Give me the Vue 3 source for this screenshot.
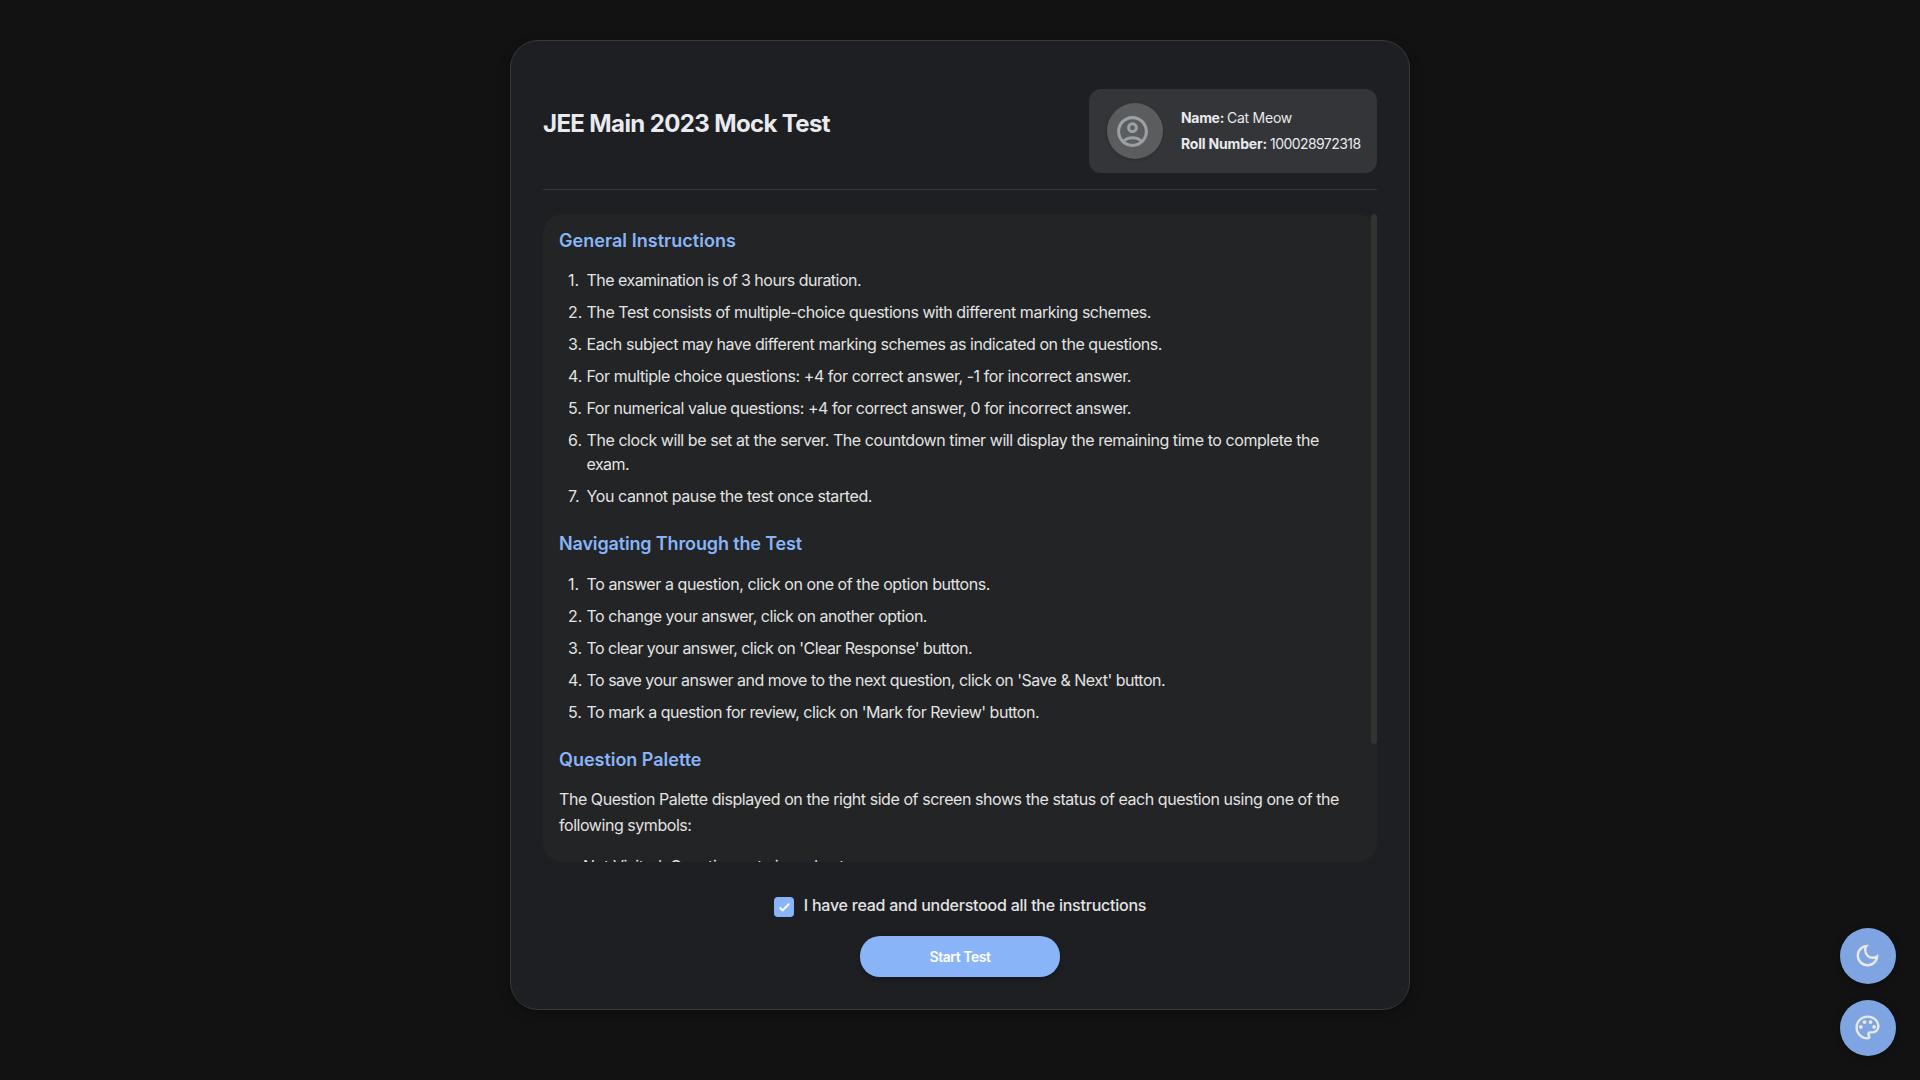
<script setup>
import { ref } from 'vue'

const vFit = {
  mounted(el, { value }) {
    const range = document.createRange()
    range.selectNodeContents(el)
    const natural = range.getBoundingClientRect().width
    const gaps = el.textContent.length
    el.style.letterSpacing = `${((value - natural) / gaps).toFixed(4)}px`
  },
}

const agreed = ref(true)

const candidate = [
  { label: 'Name:', labelWidth: 43, value: 'Cat Meow', valueWidth: 65 },
  { label: 'Roll Number:', labelWidth: 86, value: '100028972318', valueWidth: 90.5 },
]

const sections = [
  {
    title: 'General Instructions',
    width: 177,
    items: [
      [['The examination is of 3 hours duration.', 274.5]],
      [['The Test consists of multiple-choice questions with different marking schemes.', 564.5]],
      [['Each subject may have different marking schemes as indicated on the questions.', 575.5]],
      [['For multiple choice questions: +4 for correct answer, -1 for incorrect answer.', 544.5]],
      [['For numerical value questions: +4 for correct answer, 0 for incorrect answer.', 544.5]],
      [
        ['The clock will be set at the server. The countdown timer will display the remaining time to complete the', 732.5],
        ['exam.', 42.5],
      ],
      [['You cannot pause the test once started.', 285.5]],
    ],
  },
  {
    title: 'Navigating Through the Test',
    width: 243,
    items: [
      [['To answer a question, click on one of the option buttons.', 403.5]],
      [['To change your answer, click on another option.', 340.5]],
      [["To clear your answer, click on 'Clear Response' button.", 385.5]],
      [["To save your answer and move to the next question, click on 'Save & Next' button.", 578.5]],
      [["To mark a question for review, click on 'Mark for Review' button.", 452.5]],
    ],
  },
]

const paletteIntro = [
  ['The Question Palette displayed on the right side of screen shows the status of each question using one of the', 780],
  ['following symbols:', 132.5],
]
</script>

<template>
  <main class="page">
    <section class="card">
      <header class="head">
        <h1><span v-fit="287">JEE Main 2023 Mock Test</span></h1>
        <div class="user">
          <div class="avatar">
            <svg viewBox="0 0 24 24" width="37" height="37">
              <path d="M12 2C6.48 2 2 6.48 2 12s4.48 10 10 10 10-4.48 10-10S17.52 2 12 2zM7.35 18.5C8.66 17.56 10.26 17 12 17s3.34.56 4.65 1.5C15.34 19.44 13.74 20 12 20s-3.34-.56-4.65-1.5zm10.79-1.38C16.45 15.8 14.32 15 12 15s-4.45.8-6.14 2.12C4.7 15.73 4 13.95 4 12c0-4.42 3.58-8 8-8s8 3.58 8 8c0 1.95-.7 3.73-1.86 5.12zM12 6c-1.93 0-3.5 1.57-3.5 3.5S10.07 13 12 13s3.5-1.57 3.5-3.5S13.93 6 12 6zm0 5c-.83 0-1.5-.67-1.5-1.5S11.17 8 12 8s1.5.67 1.5 1.5S12.83 11 12 11z" />
            </svg>
          </div>
          <div class="details">
            <p v-for="c in candidate" :key="c.label">
              <strong v-fit="c.labelWidth">{{ c.label }}</strong>
              <span v-fit="c.valueWidth">{{ c.value }}</span>
            </p>
          </div>
        </div>
      </header>

      <div class="instructions">
        <div class="content">
          <template v-for="s in sections" :key="s.title">
            <h2><span v-fit="s.width">{{ s.title }}</span></h2>
            <ol>
              <li v-for="(lines, i) in s.items" :key="i">
                <span class="num">{{ i + 1 }}.</span>
                <div>
                  <div v-for="l in lines" :key="l[0]"><span v-fit="l[1]">{{ l[0] }}</span></div>
                </div>
              </li>
            </ol>
          </template>
          <h2><span v-fit="142.5">Question Palette</span></h2>
          <div class="intro">
            <div v-for="l in paletteIntro" :key="l[0]"><span v-fit="l[1]">{{ l[0] }}</span></div>
          </div>
          <div class="status"><span v-fit="261">Not Visited: Question not viewed yet</span></div>
        </div>
        <div class="track"><div class="thumb"></div></div>
      </div>

      <footer class="foot">
        <label class="agree" @click.prevent="agreed = !agreed">
          <span class="box" :class="{ on: agreed }">
            <svg v-if="agreed" viewBox="0 0 20 20" width="20" height="20">
              <path d="M5.7 10.6 8.7 13.4 15.2 6.6" />
            </svg>
          </span>
          <span v-fit="342.5">I have read and understood all the instructions</span>
        </label>
        <button class="start"><span v-fit="61">Start Test</span></button>
      </footer>
    </section>

    <nav class="fabs">
      <button class="fab">
        <svg viewBox="0 -960 960 960" width="29" height="29">
          <path d="M480-120q-150 0-255-105T120-480q0-150 105-255t255-105q14 0 27.5 1t26.5 3q-41 29-65.5 75.5T444-660q0 90 63 153t153 63q55 0 101-24.5t75-65.5q2 13 3 26.5t1 27.5q0 150-105 255T480-120Zm0-80q88 0 158-48.5T740-375q-20 5-40 8t-40 3q-123 0-209.5-86.5T364-660q0-20 3-40t8-40q-78 32-126.5 102T200-480q0 116 82 198t198 82Z" />
        </svg>
      </button>
      <button class="fab">
        <svg viewBox="0 0 24 24" width="29" height="29">
          <path d="M12 22C6.49 22 2 17.51 2 12S6.49 2 12 2s10 4.04 10 9c0 3.31-2.69 6-6 6h-1.77c-.28 0-.5.22-.5.5 0 .12.05.23.13.33.41.47.64 1.06.64 1.67A2.5 2.5 0 0 1 12 22zm0-18c-4.41 0-8 3.59-8 8s3.59 8 8 8c.28 0 .5-.22.5-.5a.54.54 0 0 0-.14-.35c-.41-.46-.63-1.05-.63-1.65a2.5 2.5 0 0 1 2.5-2.5H16c2.21 0 4-1.79 4-4 0-3.86-3.59-7-8-7z" />
          <circle cx="6.5" cy="11.5" r="1.6" />
          <circle cx="9.5" cy="7.5" r="1.6" />
          <circle cx="14.5" cy="7.5" r="1.6" />
          <circle cx="17.5" cy="11.5" r="1.6" />
        </svg>
      </button>
    </nav>
  </main>
</template>

<style>
body {
  background: #121212;
}
</style>

<style scoped>
.page {
  box-sizing: border-box;
  height: 1080px;
  padding-top: 40px;
  background: #121212;
  color: #e3e3e3;
  font-family: Inter, 'Open Sans', sans-serif;
  font-size: 16px;
  font-weight: 440;
  overflow: hidden;
}
h1,
h2,
p,
ol {
  margin: 0;
  padding: 0;
}
.card {
  box-sizing: border-box;
  display: flex;
  flex-direction: column;
  width: 900px;
  height: 970px;
  margin: 0 auto;
  padding: 32px;
  border: 1px solid #37383b;
  border-radius: 28px;
  background: #1e1f23;
  box-shadow: 0 4px 12px rgba(0, 0, 0, 0.3);
}
.head {
  display: flex;
  justify-content: space-between;
  align-items: center;
  padding: 16px 0;
  border-bottom: 1px solid #35363a;
}
h1 {
  margin-bottom: 15px;
  font-size: 24px;
  font-weight: 650;
  line-height: 32px;
  color: #e8eaed;
  white-space: nowrap;
}
.user {
  box-sizing: border-box;
  display: flex;
  align-items: center;
  gap: 18px;
  width: 288px;
  height: 84px;
  padding: 0 0 0 18px;
  border-radius: 12px;
  background: #343538;
}
.avatar {
  box-sizing: border-box;
  display: flex;
  align-items: center;
  justify-content: center;
  width: 56px;
  height: 56px;
  padding-right: 5px;
  border-radius: 50%;
  background: #5b5c5e;
  box-shadow: 0 1px 3px rgba(0, 0, 0, 0.2);
}
.avatar svg {
  fill: #9aa0a6;
}
.details {
  font-size: 14px;
  line-height: 26px;
  color: #e8eaed;
  white-space: nowrap;
}
.details p {
  display: flex;
  gap: 3px;
}
.details strong {
  font-weight: 700;
}
.instructions {
  display: flex;
  justify-content: space-between;
  height: 648px;
  margin-top: 24px;
  border-radius: 20px;
  background: #222425;
}
.content {
  box-sizing: border-box;
  width: 828px;
  height: 648px;
  padding: 14px 0 0 16px;
  overflow: hidden;
  white-space: nowrap;
}
h2 {
  margin-bottom: 16px;
  font-size: 18px;
  font-weight: 600;
  line-height: 24px;
  color: #8ab4f8;
}
h2:first-child {
  padding-top: 1px;
  margin-bottom: 15px;
}
ol {
  display: flex;
  flex-direction: column;
  gap: 8px;
  margin-bottom: 24px;
  list-style: none;
  line-height: 24px;
}
li {
  display: flex;
}
.num {
  box-sizing: border-box;
  width: 27.5px;
  padding-left: 9px;
}
.intro {
  margin-top: -2px;
  line-height: 26px;
}
.status {
  margin: 16px 0 0 24px;
  line-height: 24px;
}
.track {
  width: 6px;
}
.thumb {
  height: 530px;
  border-radius: 3px;
  background: #333332;
}
.foot {
  display: flex;
  flex-direction: column;
  align-items: center;
  gap: 19px;
  padding-top: 31px;
}
.agree {
  display: flex;
  align-items: center;
  gap: 10px;
  height: 24px;
  font-weight: 530;
  line-height: 24px;
  white-space: nowrap;
}
.box {
  width: 20px;
  height: 20px;
  margin-top: 4px;
  border-radius: 4px;
  background: #35363a;
}
.box.on {
  background: #8ab4f8;
}
.box svg {
  display: block;
  fill: none;
  stroke: #fff;
  stroke-width: 2;
}
.start {
  width: 200px;
  height: 41px;
  padding: 0;
  border: 0;
  border-radius: 20px;
  background: #8ab4f8;
  color: #fff;
  font: 600 14px Inter, sans-serif;
  box-shadow: 0 2px 5px rgba(0, 0, 0, 0.3);
}
.fabs {
  position: fixed;
  right: 24px;
  bottom: 24px;
  display: flex;
  flex-direction: column;
  gap: 16px;
}
.fab {
  box-sizing: border-box;
  display: flex;
  align-items: center;
  justify-content: center;
  width: 56px;
  height: 56px;
  padding: 0 1px 1px 0;
  border: 0;
  border-radius: 50%;
  background: #7ea4e1;
  box-shadow: 0 2px 8px rgba(0, 0, 0, 0.3);
}
.fab svg {
  fill: #e8e8e8;
}
</style>
